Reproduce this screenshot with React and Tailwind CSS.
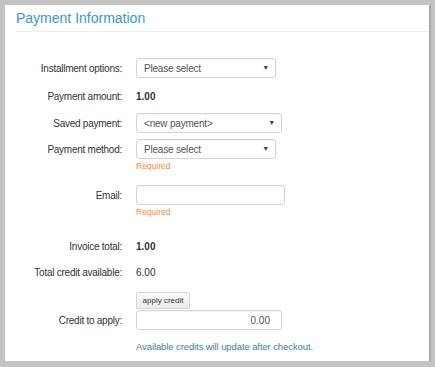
import React from "react";

function SelectBox({ value, width }) {
  return (
    <div
      className="flex h-[20px] items-center justify-between rounded-[3px] border border-[#d4d4d4] bg-white pl-[7px] pr-[6px] text-[10px] tracking-[-0.2px] text-[#555] shadow-[inset_0_1px_1px_rgba(0,0,0,0.05)]"
      style={{ width }}
    >
      <span>{value}</span>
      <span className="text-[7px] text-[#444]">▼</span>
    </div>
  );
}

function Row({ label, children, className = "" }) {
  return (
    <div className={`flex items-center ${className}`}>
      <div className="w-[117px] shrink-0 text-right text-[10px] tracking-[-0.25px] text-[#333]">
        {label}
      </div>
      <div className="ml-[14px] flex items-center">{children}</div>
    </div>
  );
}

export default function App() {
  return (
    <div className="h-[367px] w-[435px] bg-[#c3c3c3] pl-[5px] pt-[5px] font-['Liberation_Sans',Arial,sans-serif]">
      <div className="h-[356px] w-[426px] border-r-2 border-[#a9a9a9] bg-white">
        <div className="ml-[11px] border-b border-[#eeeeee] pb-[2px] pt-[2px] text-[14px] leading-[22px] text-[#3a97d4]">
          Payment Information
        </div>

        <Row label="Installment options:" className="mt-[26px] h-[20px]">
          <SelectBox value="Please select" width={140} />
        </Row>

        <Row label="Payment amount:" className="mt-[8px] h-[20px]">
          <span className="text-[10px] font-bold text-[#333]">1.00</span>
        </Row>

        <Row label="Saved payment:" className="mt-[7px] h-[20px]">
          <SelectBox value="<new payment>" width={146} />
        </Row>

        <Row label="Payment method:" className="mt-[6px] h-[20px]">
          <SelectBox value="Please select" width={140} />
        </Row>
        <div className="ml-[131px] h-[14px] text-[8.5px] leading-[14px] text-[#f5893d]">
          Required
        </div>

        <Row label="Email:" className="mt-[12px] h-[20px]">
          <div className="h-[20px] w-[149px] rounded-[3px] border border-[#d4d4d4] bg-white shadow-[inset_0_1px_1px_rgba(0,0,0,0.05)]" />
        </Row>
        <div className="ml-[131px] h-[14px] text-[8.5px] leading-[14px] text-[#f5893d]">
          Required
        </div>

        <Row label="Invoice total:" className="mt-[17px] h-[20px]">
          <span className="text-[10px] font-bold text-[#333]">1.00</span>
        </Row>

        <Row label="Total credit available:" className="mt-[6px] h-[20px]">
          <span className="text-[10px] text-[#333]">6.00</span>
        </Row>

        <div className="ml-[131px] mt-[10px] flex">
          <button className="h-[17px] w-[54px] rounded-t-[2px] border border-[#d4d4d4] bg-gradient-to-b from-[#fafafa] to-[#ececec] text-[8px] leading-[15px] text-[#333]">
            apply credit
          </button>
        </div>

        <Row label="Credit to apply:" className="mt-[1px] h-[20px]">
          <div className="flex h-[20px] w-[146px] items-center justify-end rounded-[3px] border border-[#d4d4d4] bg-white pr-[11px] text-[10px] text-[#555] shadow-[inset_0_1px_1px_rgba(0,0,0,0.05)]">
            0.00
          </div>
        </Row>

        <div className="ml-[131px] mt-[10px] h-[14px] text-[9.5px] tracking-[-0.1px] leading-[14px] text-[#3f7ea3]">
          Available credits will update after checkout.
        </div>
      </div>
    </div>
  );
}
